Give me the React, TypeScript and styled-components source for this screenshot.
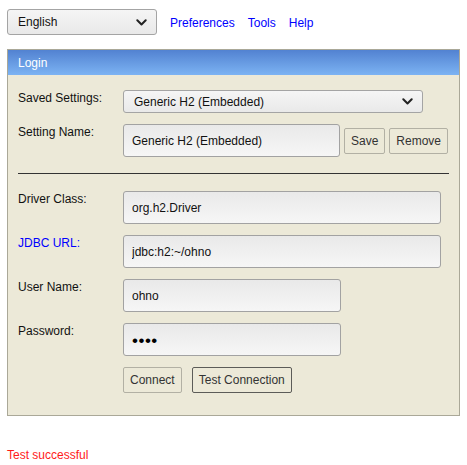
import React from "react";
import styled, { createGlobalStyle } from "styled-components";

const Global = createGlobalStyle`
  html, body { margin: 0; padding: 0; background: #fff; }
  body { font-family: "Liberation Sans", Arial, sans-serif; font-size: 12px; color: #000; }
  * { box-sizing: border-box; }
`;

const Page = styled.div`
  padding: 9px 8px 0 7px;
`;

const TopBar = styled.div`
  display: flex;
  align-items: center;
  height: 26px;
`;

const SelectBox = styled.div<{ $w: number; $h: number; $pl: number }>`
  width: ${(p) => p.$w}px;
  height: ${(p) => p.$h}px;
  border: 1px solid #a4a4a4;
  border-radius: 3px;
  background: linear-gradient(#f5f5f5, #e9e9e9);
  display: flex;
  align-items: center;
  justify-content: space-between;
  padding: 0 9px 0 ${(p) => p.$pl}px;
  font-size: 12px;
  color: #111;
  flex: none;
`;

const Chevron = () => (
  <svg width="11" height="7" viewBox="0 0 11 7">
    <path d="M1.3 1.3 L5.5 5.5 L9.7 1.3" fill="none" stroke="#222" strokeWidth="2" strokeLinecap="round" strokeLinejoin="round" />
  </svg>
);

const Links = styled.div`
  display: flex;
  gap: 13px;
  margin-left: 13px;
  padding-top: 1px;
`;

const Link = styled.a`
  color: #0000ff;
  text-decoration: none;
  font-size: 12px;
`;

const Panel = styled.div`
  margin-top: 14px;
  width: 453px;
  border: 1px solid #aaa898;
  background: #ece9d8;
`;

const PanelHeader = styled.div`
  height: 25px;
  background: linear-gradient(#5282d1, #7cb3f3);
  color: #fff;
  font-size: 12px;
  display: flex;
  align-items: center;
  padding-left: 10px;
`;

const PanelBody = styled.div`
  padding: 15px 10px 22px 10px;
  display: flex;
  flex-direction: column;
`;

const Row = styled.div<{ $mt?: number }>`
  display: flex;
  align-items: flex-start;
  margin-top: ${(p) => p.$mt ?? 11}px;
`;

const Label = styled.div<{ $blue?: boolean }>`
  width: 105px;
  flex: none;
  line-height: 14px;
  padding-top: 1px;
  color: ${(p) => (p.$blue ? "#0000ff" : "#111")};
`;

const Field = styled.input<{ $w: number }>`
  width: ${(p) => p.$w}px;
  height: 33px;
  border: 1px solid #a2a2a2;
  border-radius: 3px;
  background: linear-gradient(#e9e9e9, #f6f6f6);
  font-family: "Liberation Sans", Arial, sans-serif;
  font-size: 12px;
  color: #111;
  padding: 0 8px;
  outline: none;
  flex: none;
`;

const PasswordField = styled(Field)`
  font-size: 17px;
  letter-spacing: 0.5px;
  color: #000;
  padding: 2px 8px 0 8px;
`;

const Controls = styled.div`
  display: flex;
  align-items: center;
  gap: 4px;
`;

const Button = styled.button<{ $dark?: boolean }>`
  height: 26px;
  padding: 0 6px;
  border: 1px solid ${(p) => (p.$dark ? "#5c5c58" : "#b2b0a4")};
  border-radius: 2px;
  background: #ece9d8;
  font-family: "Liberation Sans", Arial, sans-serif;
  font-size: 12px;
  color: #333;
  flex: none;
`;

const Rule = styled.hr`
  margin: 16px 0 0 0;
  border: none;
  border-top: 1px solid #333;
  height: 0;
`;

const ButtonRow = styled.div`
  display: flex;
  gap: 10px;
  margin-top: 11px;
  padding-left: 105px;
`;

const Status = styled.div`
  margin-top: 32px;
  color: #ff1a1a;
  font-size: 12px;
`;

export default function App() {
  return (
    <>
      <Global />
      <Page>
        <TopBar>
          <SelectBox $w={150} $h={26} $pl={10}>
            <span>English</span>
            <Chevron />
          </SelectBox>
          <Links>
            <Link href="#">Preferences</Link>
            <Link href="#">Tools</Link>
            <Link href="#">Help</Link>
          </Links>
        </TopBar>
        <Panel>
          <PanelHeader>Login</PanelHeader>
          <PanelBody>
            <Row $mt={0}>
              <Label>Saved Settings:</Label>
              <SelectBox $w={300} $h={23} $pl={10}>
                <span>Generic H2 (Embedded)</span>
                <Chevron />
              </SelectBox>
            </Row>
            <Row>
              <Label>Setting Name:</Label>
              <Controls>
                <Field $w={217} readOnly value="Generic H2 (Embedded)" />
                <Button>Save</Button>
                <Button>Remove</Button>
              </Controls>
            </Row>
            <Rule />
            <Row $mt={17}>
              <Label>Driver Class:</Label>
              <Field $w={318} readOnly value="org.h2.Driver" />
            </Row>
            <Row>
              <Label $blue>JDBC URL:</Label>
              <Field $w={318} readOnly value="jdbc:h2:~/ohno" />
            </Row>
            <Row>
              <Label>User Name:</Label>
              <Field $w={218} readOnly value="ohno" />
            </Row>
            <Row>
              <Label>Password:</Label>
              <PasswordField $w={218} type="password" readOnly value="ohno" />
            </Row>
            <ButtonRow>
              <Button>Connect</Button>
              <Button $dark>Test Connection</Button>
            </ButtonRow>
          </PanelBody>
        </Panel>
        <Status>Test successful</Status>
      </Page>
    </>
  );
}
